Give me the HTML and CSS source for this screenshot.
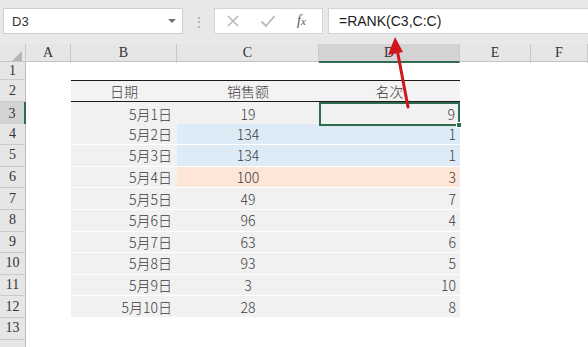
FILE: index.html
```html
<!DOCTYPE html>
<html lang="zh-CN">
<head>
<meta charset="UTF-8">
<title>RANK</title>
<link rel="stylesheet" href="styles.css">
</head>
<body>

<div class="toolbar">
  <div class="namebox">
    <span>D3</span>
    <span class="caret"></span>
  </div>
  <div class="grip">⋮</div>
  <div class="fxbox">
    <svg class="ico" width="14" height="14" viewBox="0 0 14 14"><path d="M2 2 L12 12 M12 2 L2 12" stroke="#b9b9b9" stroke-width="1.6" fill="none"/></svg>
    <svg class="ico" width="16" height="14" viewBox="0 0 16 14"><path d="M1.5 7.5 L6 12 L14.5 2" stroke="#b9b9b9" stroke-width="1.8" fill="none"/></svg>
    <span class="fx">f<i>x</i></span>
  </div>
  <div class="formula">=RANK(C3,C:C)</div>
</div>

<div class="sheet">
  <div class="row colhead">
    <div class="corner"><span class="tri"></span></div>
    <div>A</div><div>B</div><div>C</div><div class="sel">D</div><div>E</div><div>F</div>
  </div>

  <div class="row r1">
    <div class="rh">1</div><div></div><div></div><div></div><div></div><div></div><div></div>
  </div>

  <div class="row r2">
    <div class="rh">2</div><div></div>
    <div class="th">日期</div><div class="th">销售额</div><div class="th">名次</div>
    <div></div><div></div>
  </div>

  <div class="row">
    <div class="rh on">3</div><div></div>
    <div class="td b">5月1日</div><div class="td c">19</div>
    <div class="td d active">9<span class="handle"></span></div>
    <div></div><div></div>
  </div>

  <div class="row">
    <div class="rh">4</div><div></div>
    <div class="td b">5月2日</div><div class="td c blue">134</div><div class="td d blue">1</div>
    <div></div><div></div>
  </div>

  <div class="row">
    <div class="rh">5</div><div></div>
    <div class="td b">5月3日</div><div class="td c blue">134</div><div class="td d blue">1</div>
    <div></div><div></div>
  </div>

  <div class="row">
    <div class="rh">6</div><div></div>
    <div class="td b">5月4日</div><div class="td c orange">100</div><div class="td d orange">3</div>
    <div></div><div></div>
  </div>

  <div class="row">
    <div class="rh">7</div><div></div>
    <div class="td b">5月5日</div><div class="td c">49</div><div class="td d">7</div>
    <div></div><div></div>
  </div>

  <div class="row">
    <div class="rh">8</div><div></div>
    <div class="td b">5月6日</div><div class="td c">96</div><div class="td d">4</div>
    <div></div><div></div>
  </div>

  <div class="row">
    <div class="rh">9</div><div></div>
    <div class="td b">5月7日</div><div class="td c">63</div><div class="td d">6</div>
    <div></div><div></div>
  </div>

  <div class="row">
    <div class="rh">10</div><div></div>
    <div class="td b">5月8日</div><div class="td c">93</div><div class="td d">5</div>
    <div></div><div></div>
  </div>

  <div class="row">
    <div class="rh">11</div><div></div>
    <div class="td b">5月9日</div><div class="td c">3</div><div class="td d">10</div>
    <div></div><div></div>
  </div>

  <div class="row">
    <div class="rh">12</div><div></div>
    <div class="td b">5月10日</div><div class="td c">28</div><div class="td d">8</div>
    <div></div><div></div>
  </div>

  <div class="row">
    <div class="rh">13</div><div></div><div></div><div></div><div></div><div></div><div></div>
  </div>

  <div class="row">
    <div class="rh"></div><div></div><div></div><div></div><div></div><div></div><div></div>
  </div>
</div>

<!-- red pointer drawn over the sheet -->
<svg class="arrow" width="40" height="90" viewBox="0 0 40 90">
  <path d="M25 72 L14 14" stroke="#d1151d" stroke-width="3" fill="none" stroke-linecap="round"/>
  <path d="M12 2 L5 20 L20 17 Z" fill="#d1151d"/>
</svg>

</body>
</html>
```

FILE: styles.css
```css
*{box-sizing:border-box;}

html,body{
    margin:0;
    padding:0;
    overflow:hidden;
    background:#fff;
}

body{
    font-family:"Noto Sans CJK SC","Liberation Sans",sans-serif;
    width:588px;
    height:347px;
    position:relative;
}

/* Toolbar */
.toolbar{
    height:44px;
    background:#e8e8e8;
    display:flex;
    align-items:flex-start;
    padding-top:8px;
    padding-left:3px;
}

.namebox{
    width:180px;
    height:26px;
    background:#fff;
    border:1px solid #cfcfcf;
    display:flex;
    align-items:center;
    justify-content:space-between;
    padding:0 6px 0 8px;
    font-family:"Liberation Sans",sans-serif;
    font-size:13px;
    color:#333;
}

.caret{
    width:0;
    height:0;
    border-left:4px solid transparent;
    border-right:4px solid transparent;
    border-top:4px solid #707070;
}

.grip{
    width:31px;
    text-align:center;
    color:#a8a8a8;
    font-size:14px;
    line-height:26px;
}

.fxbox{
    width:109px;
    height:26px;
    background:#fff;
    border:1px solid #d4d4d4;
    display:flex;
    align-items:center;
    padding-left:11px;
    gap:20px;
}

.fx{
    font-family:"Liberation Serif",serif;
    font-style:italic;
    font-size:14px;
    color:#555;
    margin-left:1px;
}
.fx i{font-size:11px;}

.formula{
    flex:1;
    height:26px;
    margin-left:5px;
    background:#fff;
    border-top:1px solid #d4d4d4;
    border-bottom:1px solid #d4d4d4;
    border-left:1px solid #d4d4d4;
    padding-left:10px;
    font-family:"Liberation Sans",sans-serif;
    font-size:14px;
    line-height:24px;
    color:#222;
}

/* Sheet */
.sheet{display:flex;flex-direction:column;}

.row{
    display:grid;
    grid-template-columns:26px 45px 106px 142px 141px 71px 57px;
    height:21.6px;
    font-size:14px;
    font-weight:300;
    color:#3a3a3a;
}

.row.r1{height:18px;}
.row.r2{height:22px;}

.colhead{
    height:18px;
    background:#e6e6e6;
    font-family:"Liberation Serif",serif;
    font-size:14px;
    font-weight:normal;
    color:#333;
    border-bottom:1px solid #c4c4c4;
}

.colhead>div{
    text-align:center;
    line-height:18px;
    border-right:1px solid #c9c9c9;
}

.colhead .sel{
    background:#d3d3d3;
    border-bottom:2px solid #2f6b4f;
    line-height:17px;
}

.corner{position:relative;}
.tri{
    position:absolute;
    right:3px;
    bottom:2px;
    width:0;
    height:0;
    border-left:10px solid transparent;
    border-bottom:10px solid #b5b5b5;
}

.rh{
    background:#e6e6e6;
    border-right:1px solid #bdbdbd;
    border-bottom:1px solid #cbcbcb;
    font-family:"Liberation Serif",serif;
    font-size:14px;
    font-weight:normal;
    color:#333;
    display:flex;
    align-items:center;
    justify-content:center;
}

.rh.on{
    background:#d3d3d3;
    border-right:2px solid #2f6b4f;
}

/* Table */
.th{
    background:#f3f3f3;
    border-top:1px solid #1a1a1a;
    border-bottom:1px solid #1a1a1a;
    display:flex;
    align-items:center;
    justify-content:center;
    color:#3c3c3c;
}

.td{
    background:#f1f1f1;
    border-bottom:1px solid #fff;
    display:flex;
    align-items:center;
    padding:0 5px;
    color:#3c3c3c;
}

.td.b{justify-content:flex-end;}
.td.c{justify-content:center;}
.td.d{justify-content:flex-end;padding-right:4px;}

.td.blue{background:#ddebf6;}
.td.orange{background:#fde6d7;}

.td.active{
    position:relative;
    border:2px solid #2f6b4f;
    padding-right:3px;
}

.handle{
    position:absolute;
    right:-4px;
    bottom:-4px;
    width:6px;
    height:6px;
    background:#2f6b4f;
    border:1px solid #fff;
}

.arrow{
    position:absolute;
    left:383px;
    top:35px;
}
```
